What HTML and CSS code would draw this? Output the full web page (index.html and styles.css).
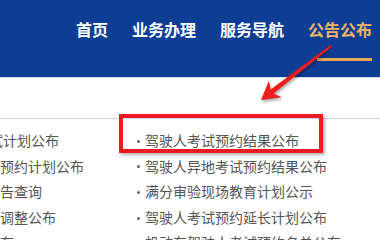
FILE: index.html
```html
<!DOCTYPE html>
<html lang="zh-CN">
<head>
<meta charset="utf-8">
<title>公告公布</title>
<link rel="stylesheet" href="styles.css">
</head>
<body>
<div class="page">
  <header class="header">
    <nav class="nav">
      <a class="nav-item">首页</a>
      <a class="nav-item">业务办理</a>
      <a class="nav-item">服务导航</a>
      <a class="nav-item active">公告公布</a>
    </nav>
  </header>
  <div class="spacer"></div>
  <section class="panel">
    <ul class="col col-left">
      <li class="shift">试计划公布</li>
      <li>预约计划公布</li>
      <li>告查询</li>
      <li>调整公布</li>
      <li>布</li>
    </ul>
    <ul class="col col-right">
      <li><span class="dot"></span>驾驶人考试预约结果公布</li>
      <li><span class="dot"></span>驾驶人异地考试预约结果公布</li>
      <li><span class="dot"></span>满分审验现场教育计划公示</li>
      <li><span class="dot"></span>驾驶人考试预约延长计划公布</li>
      <li><span class="dot"></span>机动车驾驶人考试预约名单公布</li>
    </ul>
  </section>
  <div class="highlight"></div>
  <div class="patch"></div>
  <svg class="arrow" width="380" height="240" viewBox="0 0 380 240">
    <polygon points="261,100 268.9,80.7 270.6,89.4 330.4,45.2 331.6,46.8 273.6,93.4 281.7,97.3" fill="#f01c1c"/>
  </svg>
</div>
</body>
</html>
```

FILE: styles.css
```css
* { box-sizing: border-box; }
html, body { margin: 0; padding: 0; background: #fff; }
body {
  width: 380px;
  height: 240px;
  overflow: hidden;
  font-family: "Noto Sans CJK SC", "Noto Sans", sans-serif;
}
.page {
  position: relative;
  width: 380px;
  height: 240px;
  overflow: hidden;
}
.header {
  height: 78px;
  background: #0e3e94;
  border-bottom: 1px solid #d3dceb;
}
.nav {
  display: flex;
  justify-content: flex-end;
  gap: 24px;
  padding: 17px 8px 0 0;
}
.nav-item {
  position: relative;
  font-size: 16px;
  font-weight: bold;
  line-height: 24px;
  color: #fff;
  white-space: nowrap;
}
.nav-item.active { color: #f3b467; }
.nav-item.active::after {
  content: "";
  position: absolute;
  left: 9px;
  right: 0;
  top: 41px;
  height: 3px;
  background: #e9a95a;
}
.spacer { height: 40px; }
.panel {
  border-top: 1px solid #c9d9ee;
  display: grid;
  grid-template-columns: 135px 1fr;
  padding-top: 9px;
}
.col {
  list-style: none;
  margin: 0;
  padding: 0;
  font-size: 14px;
  line-height: 25.6px;
  color: #555;
  white-space: nowrap;
}
.col-left { overflow: hidden; }
.col-left .shift { margin-left: -11px; }
.col-right li {
  display: flex;
  align-items: center;
}
.dot {
  width: 3px;
  height: 3px;
  border-radius: 50%;
  background: #666;
  margin: 1px 5px 0 2px;
  flex: none;
}
.highlight {
  position: absolute;
  left: 119px;
  top: 114px;
  width: 204px;
  height: 39px;
  border: 4px solid #ec1b22;
  box-shadow: 2px 2px 3px rgba(0, 0, 0, 0.3);
}
.patch {
  position: absolute;
  left: 358px;
  top: 216px;
  width: 22px;
  height: 24px;
  background: #fff;
}
.arrow {
  position: absolute;
  left: 0;
  top: 0;
  pointer-events: none;
  filter: drop-shadow(1px 2px 1.5px rgba(0, 0, 0, 0.35));
}
```
